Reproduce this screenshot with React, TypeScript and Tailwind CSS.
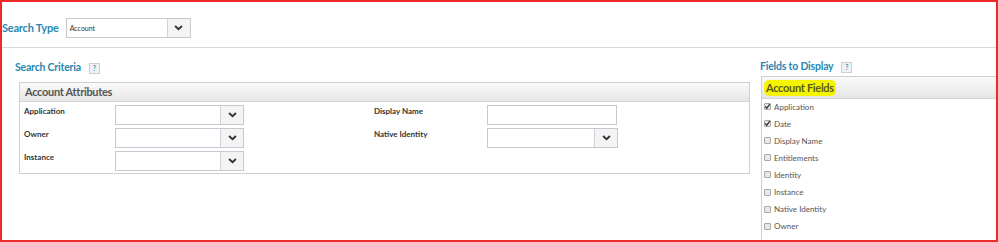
import React from "react";

const Chevron = () => (
  <svg width="9" height="6" viewBox="0 0 10 7" className="block">
    <path d="M1 1.2 L5 5 L9 1.2" fill="none" stroke="#333" strokeWidth="2.2" />
  </svg>
);

const SelectBox = ({ w, text }: { w: string; text?: string }) => (
  <div className={`flex h-[20px] ${w} border border-[#c8c8d0] bg-white`}>
    <div className="flex-1 flex items-center pl-[3px] text-[7px] text-[#333]">{text}</div>
    <div className="w-[23px] flex items-center justify-center border-l border-[#d0d0d8] bg-[#f4f4f4]">
      <Chevron />
    </div>
  </div>
);

const Help = () => (
  <span className="inline-flex items-center justify-center w-[11px] h-[11px] border border-[#c8d0d8] bg-[#eef2f5] text-[7px] font-bold text-[#5a8fb5] leading-none">
    ?
  </span>
);

const Check = ({ on }: { on?: boolean }) => (
  <span className="relative inline-block w-[7px] h-[7px] rounded-[1px] border border-[#a8a8a8] bg-[#e8e8e8]">
    {on && (
      <svg width="7" height="7" viewBox="0 0 7 7" className="absolute left-[-1px] top-[-1px]">
        <path d="M1.2 3.5 L2.8 5.2 L5.8 1.2" fill="none" stroke="#333" strokeWidth="1.3" />
      </svg>
    )}
  </span>
);

const fields: [string, boolean][] = [
  ["Application", true],
  ["Date", true],
  ["Display Name", false],
  ["Entitlements", false],
  ["Identity", false],
  ["Instance", false],
  ["Native Identity", false],
  ["Owner", false],
  ["", false],
];

export default function App() {
  return (
    <div
      className="w-[998px] h-[242px] border-2 border-[#ee2b2b] bg-white overflow-hidden"
      style={{ fontFamily: "Lato, 'Open Sans', Arial, sans-serif" }}
    >
      <div className="flex items-center h-[44px] pt-[8px] gap-[7px]">
        <span className="text-[11px] font-bold text-[#2a87b0] tracking-[-0.2px]">Search Type</span>
        <SelectBox w="w-[125px]" text="Account" />
      </div>
      <div className="h-px bg-[#d8d8d8] mt-[1px]" />
      <div className="flex">
        <div className="w-[748px] pl-[13px]">
          <div className="flex items-center gap-[8px] h-[16px] mt-[12px]">
            <span className="text-[10.5px] font-bold text-[#2a87b0] tracking-[-0.2px]">Search Criteria</span>
            <Help />
          </div>
          <div className="ml-[4px] mt-[6px] w-[731px] border border-[#cfcfcf]">
            <div className="h-[19px] flex items-center pl-[5px] bg-gradient-to-b from-[#fafafa] to-[#e6e6e6] border-b border-[#d4d4d4] text-[11px] font-bold text-[#555] tracking-[-0.3px]">
              Account Attributes
            </div>
            <div className="grid grid-cols-[354px_1fr] pt-[3px] pb-[2px]">
              <div className="flex flex-col gap-[3px]">
                {["Application", "Owner", "Instance"].map((l) => (
                  <div key={l} className="flex h-[20px]">
                    <span className="w-[95px] pl-[4px] text-[8px] font-bold text-[#333] leading-[10px] pt-[1px]">{l}</span>
                    <SelectBox w="w-[129px]" />
                  </div>
                ))}
              </div>
              <div className="flex flex-col gap-[3px]">
                <div className="flex h-[20px]">
                  <span className="w-[113px] text-[8px] font-bold text-[#333] leading-[10px] pt-[1px]">Display Name</span>
                  <div className="w-[130px] h-[20px] border border-[#c8c8d0]" />
                </div>
                <div className="flex h-[20px]">
                  <span className="w-[113px] text-[8px] font-bold text-[#333] leading-[10px] pt-[1px]">Native Identity</span>
                  <SelectBox w="w-[131px]" />
                </div>
              </div>
            </div>
          </div>
        </div>
        <div className="flex-1 pl-[10px]">
          <div className="flex items-center gap-[8px] h-[16px] mt-[11px]">
            <span className="text-[10.5px] font-bold text-[#2a87b0] tracking-[-0.2px]">Fields to Display</span>
            <Help />
          </div>
          <div className="ml-[1px] mt-[1px] border-l border-t border-[#cfcfcf] h-[200px]">
            <div className="h-[22px] flex items-center pl-[2px] bg-gradient-to-b from-[#fafafa] to-[#e6e6e6] border-b border-[#d4d4d4]">
              <span className="text-[11px] font-bold text-[#5a5a20] bg-[#f6f500] rounded-[5px] px-[2px] leading-[16px] tracking-[-0.3px]">
                Account Fields
              </span>
            </div>
            <div className="flex flex-col pl-[2px] -mt-[1px]">
              {fields.map(([f, on], i) => (
                <div key={i} className="flex items-center gap-[3px] h-[17.1px]">
                  <Check on={on} />
                  {f && <span className="text-[8px] text-[#555]">{f}</span>}
                </div>
              ))}
            </div>
          </div>
        </div>
      </div>
    </div>
  );
}
